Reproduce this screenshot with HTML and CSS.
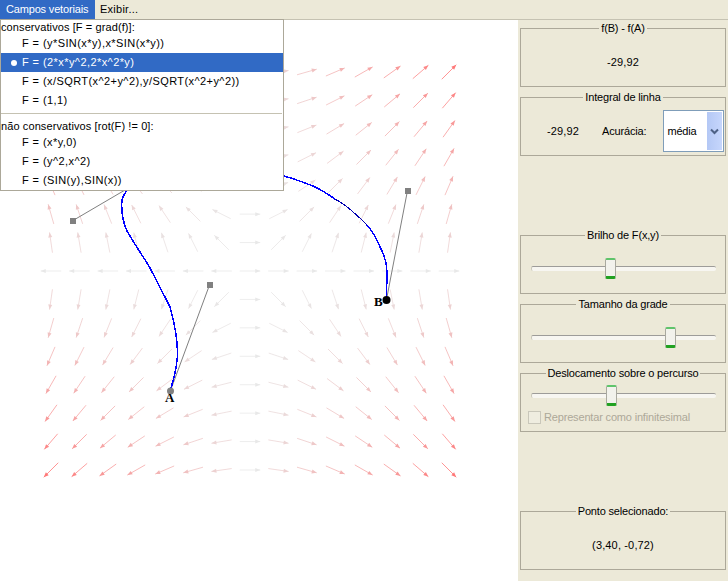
FILE: index.html
```html
<!DOCTYPE html>
<html>
	<head>
		<meta charset="utf-8">
		<title>Campos vetoriais</title>
		<link rel="stylesheet" href="styles.css">
	</head>
	<body>
		<div class="menubar">
			<span class="menubar-item active">Campos vetoriais</span>
			<span class="menubar-item">Exibir...</span>
		</div>

		<ul class="dropdown">
			<li class="dropdown-head">conservativos [F = grad(f)]:</li>
			<li class="dropdown-item">F = (y*SIN(x*y),x*SIN(x*y))</li>
			<li class="dropdown-item selected">F = (2*x*y^2,2*x^2*y)</li>
			<li class="dropdown-item">F = (x/SQRT(x^2+y^2),y/SQRT(x^2+y^2))</li>
			<li class="dropdown-item">F = (1,1)</li>
			<li class="dropdown-sep"></li>
			<li class="dropdown-head">não conservativos [rot(F) != 0]:</li>
			<li class="dropdown-item">F = (x*y,0)</li>
			<li class="dropdown-item">F = (y^2,x^2)</li>
			<li class="dropdown-item">F = (SIN(y),SIN(x))</li>
		</ul>

		<div class="main">
			<div class="plot">
				<svg id="field" class="field" viewBox="0 20 518 561" width="518" height="561">
					<g id="arrows"></g>
					<path class="handle" d="M170.500 390.500 L209.500 285 M73 220.500 L125 190 M386.500 299.500 L407.500 190.500"/>
					<rect class="knob" x="70" y="218" width="6" height="6"/>
					<rect class="knob" x="207" y="282" width="6" height="6"/>
					<rect class="knob" x="405" y="188" width="6" height="6"/>
					<path class="curve" d="M170.500 390 C174 377 177.500 367 177.500 353 C177.500 340 175 325 170 307 C165 297 160 287 150 268 C143 256 133 242 126.500 230 C122 219 121 210 122 200 C123 196 125 193 127 190"/>
					<path class="curve" d="M284 176 C295 179 305 183 313 186 C322 190 329 195 335 199"/>
					<path class="curve thin" d="M335 199 C342 203 348 207 353 212 C358 216 362 220 367 225"/>
					<path class="curve" d="M367 225 C373 232 377 239 380 247 C385 256 387 264 387 272 L386.500 298"/>
					<circle class="point-a" cx="170.500" cy="391" r="3.500"/>
					<circle class="point-b" cx="386.500" cy="300" r="4"/>
					<text class="point-label" x="165" y="402">A</text>
					<text class="point-label" x="374" y="306">B</text>
				</svg>
			</div>

			<div class="side">
				<fieldset class="group first">
					<legend>f(B) - f(A)</legend>
					<div class="value">-29,92</div>
				</fieldset>

				<fieldset class="group second">
					<legend>Integral de linha</legend>
					<div class="integral">
						<span class="number">-29,92</span>
						<span class="accuracy">Acurácia:</span>
						<div class="combo">
							<span class="combo-text">média</span>
							<span class="combo-btn">
								<svg width="9" height="7" viewBox="0 0 9 7"><path d="M1 1.500 L4.500 5 L8 1.500" fill="none" stroke="#4d6185" stroke-width="2"/></svg>
							</span>
						</div>
					</div>
				</fieldset>

				<fieldset class="group brightness">
					<legend>Brilho de F(x,y)</legend>
					<div class="slider"><div class="track"></div><div class="thumb" style="left:74px"></div></div>
				</fieldset>

				<fieldset class="group gridsize">
					<legend>Tamanho da grade</legend>
					<div class="slider"><div class="track"></div><div class="thumb" style="left:134px"></div></div>
				</fieldset>

				<fieldset class="group offset">
					<legend>Deslocamento sobre o percurso</legend>
					<div class="slider short"><div class="track"></div><div class="thumb" style="left:75px"></div></div>
					<label class="check"><span class="check-box"></span>Representar como infinitesimal</label>
				</fieldset>

				<fieldset class="group selected-point">
					<legend>Ponto selecionado:</legend>
					<div class="value">(3,40, -0,72)</div>
				</fieldset>
			</div>
		</div>

		<script src="script.js"></script>
	</body>
</html>
```

FILE: styles.css
```css
html, body {
	margin: 0;
	padding: 0;
}
body {
	width: 728px;
	height: 581px;
	overflow: hidden;
	position: relative;
	background: #ECE9D8;
	color: #000000;
	font-family: "Liberation Sans", Arial, sans-serif;
	font-size: 11px;
	letter-spacing: -0.17px;
}

/* menu */
.menubar {
	display: flex;
	height: 19px;
	background: #ECE9D8;
	border-bottom: 1px solid #C5C2B2;
}
.menubar-item {
	padding: 0 6px 0 5px;
	line-height: 18px;
}
.menubar-item:last-child {
	letter-spacing: 0.25px;
}
.menubar-item.active {
	width: 89px;
	padding: 0 0 0 6px;
	background: #316AC5;
	color: #FFFFFF;
}
.dropdown {
	position: absolute;
	left: 0;
	top: 19px;
	width: 284px;
	height: 172px;
	box-sizing: border-box;
	margin: 0;
	padding: 0;
	list-style: none;
	background: #FFFFFF;
	border: 1px solid #ACA899;
	z-index: 2;
}
.dropdown-head {
	height: 14px;
	line-height: 14px;
	letter-spacing: 0.1px;
}
.dropdown-item {
	position: relative;
	height: 19px;
	line-height: 19px;
	padding-left: 21px;
	letter-spacing: 0.42px;
}
.dropdown-item.selected {
	background: #316AC5;
	color: #FFFFFF;
}
.dropdown-item.selected::before {
	content: "";
	position: absolute;
	left: 10px;
	top: 7px;
	width: 6px;
	height: 6px;
	border-radius: 50%;
	background: #FFFFFF;
}
.dropdown-sep {
	height: 1px;
	margin: 3px 1px 5px 0;
	background: #C5C2B2;
}

/* plot */
.main {
	display: flex;
	height: 561px;
}
.plot {
	width: 518px;
	height: 561px;
	background: #FFFFFF;
}
.field {
	display: block;
}
.arrow {
	fill: none;
	stroke-width: 0.8;
}
.handle {
	fill: none;
	stroke: #808080;
	stroke-width: 1;
}
.knob {
	fill: #808080;
}
.curve {
	fill: none;
	stroke: #0000FF;
	stroke-width: 1.5;
	shape-rendering: crispEdges;
}
.curve.thin {
	stroke: #0000B0;
	stroke-width: 1.1;
}
.point-a {
	fill: #808080;
}
.point-b {
	fill: #000000;
}
.point-label {
	font-family: "Liberation Serif", serif;
	font-weight: bold;
	font-size: 13px;
	fill: #000000;
}

/* right side */
.side {
	width: 210px;
	padding: 0 2px;
	box-sizing: border-box;
}
.group {
	display: block;
	box-sizing: border-box;
	width: 206px;
	min-width: 0;
	height: 66px;
	margin: 0;
	padding: 0;
	border: 1px solid #ACA899;
}
.group legend {
	margin: 0 auto;
	padding: 0 2px;
	height: 14px;
	line-height: 14px;
	text-align: center;
}
.group.first {
	margin-top: 1px;
}
.group.second {
	margin-top: 3px;
}
.group.brightness {
	margin-top: 72px;
}
.group.gridsize {
	margin-top: 3px;
}
.group.offset {
	margin-top: 3px;
}
.group.selected-point {
	margin-top: 72px;
}
.value {
	text-align: center;
	line-height: 14px;
	margin-top: 20px;
	letter-spacing: 0.15px;
}
.integral {
	display: flex;
	align-items: center;
	margin-top: 6px;
	padding-left: 26px;
}
.number {
	letter-spacing: 0.15px;
}
.accuracy {
	margin-left: 23px;
}
.combo {
	display: flex;
	flex-shrink: 0;
	box-sizing: border-box;
	width: 61px;
	height: 42px;
	margin-left: 17px;
	padding: 1px;
	background: #FFFFFF;
	border: 1px solid #7F9DB9;
}
.combo-text {
	flex: 1;
	padding-left: 2px;
	line-height: 38px;
}
.combo-btn {
	display: flex;
	align-items: center;
	justify-content: center;
	width: 15px;
	background: linear-gradient(to right, #B4C8F5, #C6D6FC);
}
.slider {
	position: relative;
	height: 21px;
	margin: 16px 9px 0 10px;
}
.slider.short {
	margin-top: 5px;
}
.track {
	box-sizing: border-box;
	height: 5px;
	margin-top: 8px;
	position: absolute;
	left: 0;
	right: 0;
	background: #F7F6F1;
	border-top: 1px solid #9D9C99;
	border-left: 1px solid #C9C7BA;
	border-radius: 2px;
}
.thumb {
	position: absolute;
	top: 0;
	box-sizing: border-box;
	width: 11px;
	height: 21px;
	background: #F2F2EC;
	border: 1px solid #A9A99F;
	border-top: 2px solid #5FC46B;
	border-bottom: 3px solid #21A121;
	border-radius: 2px;
}
.check {
	display: flex;
	align-items: center;
	margin: 4px 0 0 7px;
	color: #ACA899;
	line-height: 14px;
}
.check-box {
	box-sizing: border-box;
	width: 13px;
	height: 13px;
	margin-right: 3px;
	border: 1px solid #C9C7BA;
	background: #EFEDE0;
}
```

FILE: script.js
```js
// vector field F = (2*x*y^2, 2*x^2*y) on a 15x15 grid
var NS = 'http://www.w3.org/2000/svg';
var group = document.getElementById('arrows');
var step = 28.43, cx = 250, cy = 271, len = 20.5;

function mix(a, b, t) {
	return Math.round(a + (b - a) * t);
}

for (var j = -7; j <= 7; j++) {
	for (var i = -7; i <= 7; i++) {
		var fx = 2 * i * j * j;
		var fy = 2 * i * i * j;
		var mag = Math.sqrt(fx * fx + fy * fy);
		var dx, dy;
		if (mag == 0) {
			dx = (i < 0) ? -1 : 1;
			dy = 0;
		} else {
			dx = fx / mag;
			dy = fy / mag;
		}
		var t = Math.pow(mag / 970, 0.7);
		var color = 'rgb(' + mix(232, 255, t) + ',' + mix(232, 120, t) + ',' + mix(232, 120, t) + ')';

		var px = cx + i * step, py = cy - j * step;
		var x0 = px - dx * len / 2, y0 = py + dy * len / 2;
		var x1 = px + dx * len / 2, y1 = py - dy * len / 2;

		var line = document.createElementNS(NS, 'line');
		line.setAttribute('x1', x0);
		line.setAttribute('y1', y0);
		line.setAttribute('x2', x1);
		line.setAttribute('y2', y1);
		line.setAttribute('stroke', color);
		line.setAttribute('class', 'arrow');
		group.appendChild(line);

		var hx = x1 - dx * 5, hy = y1 + dy * 5;
		var nx = dy * 2, ny = dx * 2;
		var head = document.createElementNS(NS, 'polygon');
		head.setAttribute('points', x1 + ',' + y1 + ' ' + (hx + nx) + ',' + (hy + ny) + ' ' + (hx - nx) + ',' + (hy - ny));
		head.setAttribute('fill', color);
		group.appendChild(head);
	}
}
```
